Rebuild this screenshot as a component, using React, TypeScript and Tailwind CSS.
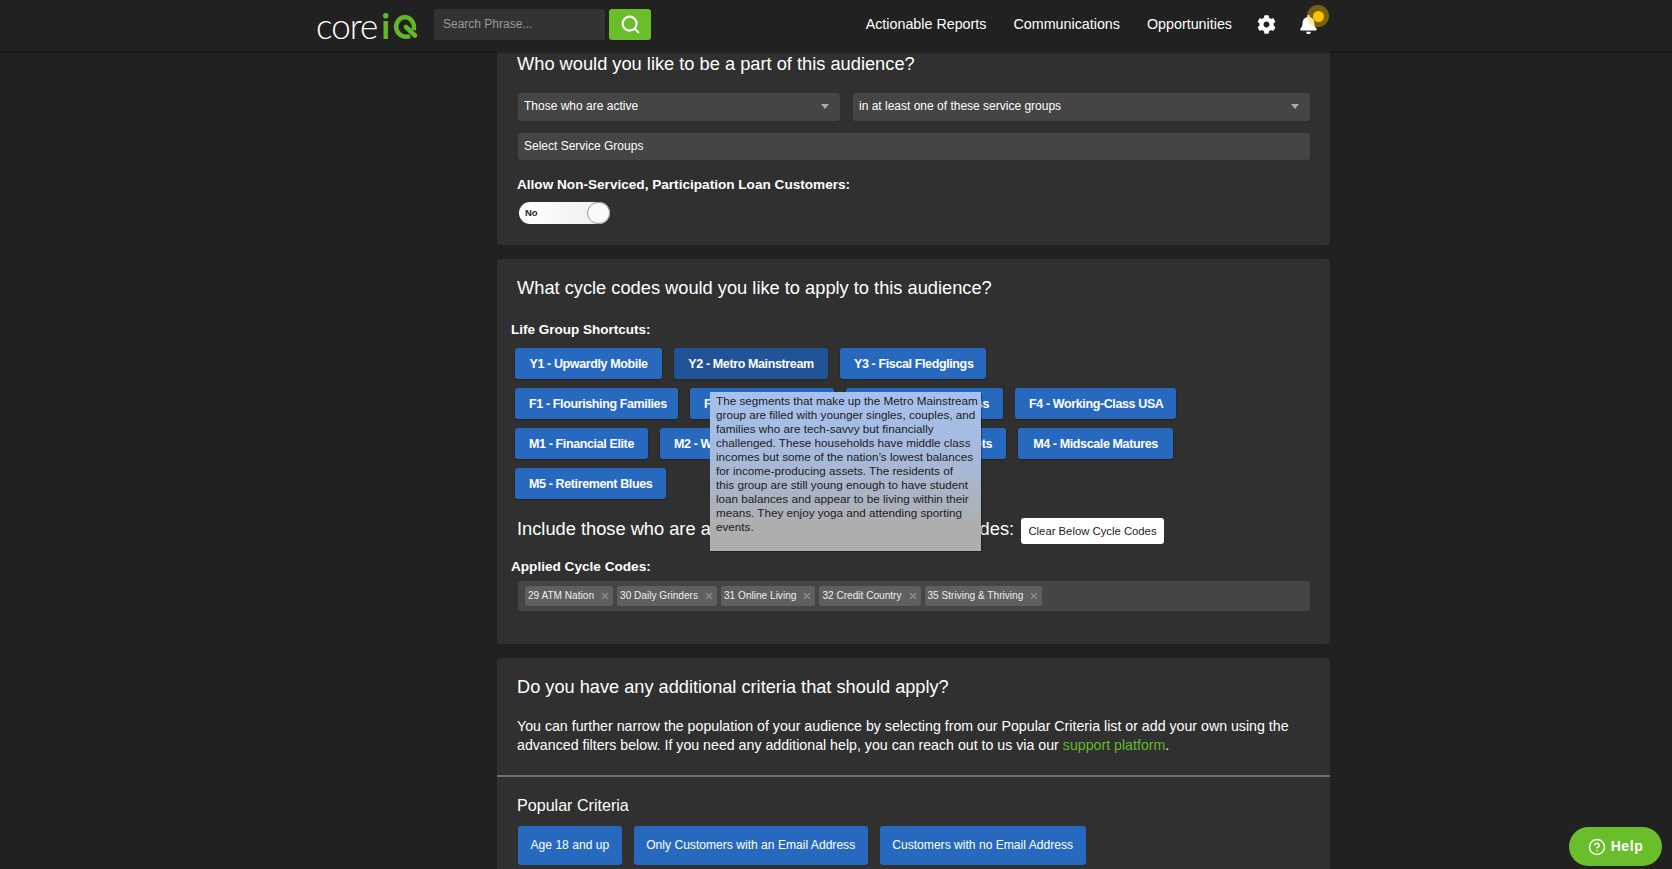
import { Search, X, CircleHelp } from "lucide-react";
import { FaCog, FaBell } from "react-icons/fa";

function Caret() {
  return <span className="w-0 h-0 border-x-[4px] border-x-transparent border-t-[5px] border-t-[#aaaaaa]" />;
}

function Shortcut({ label, width, dark }: { label: string; width: string; dark?: boolean }) {
  return (
    <button
      className={`h-[31px] px-[14px] pt-px rounded-[3px] text-white text-[12.5px] tracking-[-0.38px] font-bold whitespace-nowrap overflow-hidden shadow-[0_1px_2px_rgba(0,0,0,0.3)] ${dark ? "bg-[#215398]" : "bg-[#2869c0]"} ${width}`}
    >
      {label}
    </button>
  );
}

function Tag({ label }: { label: string }) {
  return (
    <span className="h-[20px] pl-[3px] pr-[3px] pb-px flex items-center gap-[6px] bg-[#5f5f5f] rounded-[3px] text-[10.1px] text-[#eeeeee] whitespace-nowrap">
      {label}
      <X size={10} strokeWidth={3} className="text-[#8e8e8e] mt-px" />
    </span>
  );
}

function Logo() {
  return (
    <div className="flex items-start h-[40px] w-[101px] leading-none select-none">
      <span className="font-['Lato'] font-light text-[35px] leading-[40px] text-white tracking-[-1px]">core</span>
      <span className="font-['Lato'] font-bold text-[35px] leading-[40px] text-[#63b829] ml-[4px]">i</span>
      <svg width="27" height="27" viewBox="0 0 27 27" className="ml-[1px] mt-[9px] shrink-0">
        <path d="M15 13 L24 21.5" stroke="#63b829" strokeWidth="4.5" strokeLinecap="round" fill="none" />
        <path d="M13 3 A10 10 0 1 0 19 22 M13 3 A10 10 0 0 1 22.5 16" stroke="#63b829" strokeWidth="4.5" fill="none" />
      </svg>
    </div>
  );
}

export default function App() {
  return (
    <div className="h-[869px] overflow-hidden bg-[#212121] text-white font-['Liberation_Sans',Arial,sans-serif]">
      <header className="relative z-10 h-[51px] bg-[#212121] flex items-center pb-[2px] pl-[316px] pr-[354px] shadow-[0_1px_3px_rgba(0,0,0,0.45)]">
        <Logo />
        <input
          placeholder="Search Phrase..."
          className="ml-[17px] w-[171px] h-[31px] rounded-[3px] bg-[#333333] pl-[9px] pb-[1px] text-[12px] text-white placeholder:text-[#999999] outline-none"
        />
        <button className="ml-[4px] w-[42px] h-[31px] rounded-[3px] bg-[#6abd2b] flex items-center justify-center">
          <Search size={21} strokeWidth={2.3} className="text-white" />
        </button>
        <nav className="ml-auto flex items-center text-[14.3px] text-white">
          <span>Actionable Reports</span>
          <span className="ml-[27px]">Communications</span>
          <span className="ml-[27px]">Opportunities</span>
          <FaCog size={19} className="ml-[25px]" />
          <span className="relative ml-[23px]">
            <FaBell size={19} />
            <span className="absolute left-[8px] -top-[10px] w-[22px] h-[22px] rounded-full bg-[#ffc40066] flex items-center justify-center">
              <span className="w-[11px] h-[11px] rounded-full bg-[#ffc400]" />
            </span>
          </span>
        </nav>
      </header>

      <main className="relative w-[833px] ml-[497px] flex flex-col gap-[14px]">
        <section className="bg-[#303030] rounded-b-[4px] pl-[21px] pr-[20px] pb-[21px]">
          <h2 className="text-[18.25px] leading-[26px] -ml-px">Who would you like to be a part of this audience?</h2>
          <div className="mt-[16px] flex gap-[13px]">
            <div className="flex-1 h-[28px] rounded-[3px] bg-[#454545] pl-[6px] pr-[11px] pb-[2px] flex items-center justify-between text-[12px]">
              <span>Those who are active</span>
              <Caret />
            </div>
            <div className="w-[457px] h-[28px] rounded-[3px] bg-[#454545] pl-[6px] pr-[11px] pb-[2px] flex items-center justify-between text-[12px]">
              <span>in at least one of these service groups</span>
              <Caret />
            </div>
          </div>
          <div className="mt-[12px] h-[27px] rounded-[3px] bg-[#454545] pl-[6px] pb-[1px] flex items-center text-[12px]">
            Select Service Groups
          </div>
          <div className="mt-[15px] text-[13.6px] leading-[20px] font-bold -ml-px">Allow Non-Serviced, Participation Loan Customers:</div>
          <div className="mt-[7px] ml-px relative w-[91px] h-[22px] rounded-full bg-[linear-gradient(90deg,#ffffff,#eeeeee)] flex items-center pl-[6px] text-[9.5px] font-bold text-[#222222]">
            No
            <span className="absolute right-0 top-0 w-[23px] h-[22px] rounded-full bg-[#fafafa] border border-[#9a9a9a]" />
          </div>
        </section>

        <section className="bg-[#303030] rounded-[4px] pt-[16px] pl-[14px] pr-[20px] pb-[33px]">
          <h2 className="text-[18.25px] leading-[26px] ml-[6px]">What cycle codes would you like to apply to this audience?</h2>
          <div className="mt-[19px] text-[13.5px] leading-[20px] font-bold">Life Group Shortcuts:</div>
          <div className="mt-[8px] pl-[4px] flex flex-col gap-[9px]">
            <div className="flex gap-[12px]">
              <Shortcut label="Y1 - Upwardly Mobile" width="w-[147px]" />
              <Shortcut label="Y2 - Metro Mainstream" width="w-[154px]" dark />
              <Shortcut label="Y3 - Fiscal Fledglings" width="w-[146px]" />
            </div>
            <div className="flex gap-[12px]">
              <Shortcut label="F1 - Flourishing Families" width="w-[163px]" />
              <Shortcut label="F2 - Family Balance" width="w-[144px] text-left" />
              <Shortcut label="F3 - Lifestyle Success" width="w-[157px] text-right" />
              <Shortcut label="F4 - Working-Class USA" width="w-[161px]" />
            </div>
            <div className="flex gap-[12px]">
              <Shortcut label="M1 - Financial Elite" width="w-[133px]" />
              <Shortcut label="M2 - Wealthy Seniors" width="w-[146px] text-left" />
              <Shortcut label="M3 - Liquid Assets" width="w-[188px] text-right" />
              <Shortcut label="M4 - Midscale Matures" width="w-[155px]" />
            </div>
            <div className="flex gap-[12px]">
              <Shortcut label="M5 - Retirement Blues" width="w-[151px]" />
            </div>
          </div>
          <div className="mt-[17px] ml-[7px] flex items-start">
            <h2 className="w-[504px] text-[18.25px] leading-[26px] whitespace-nowrap -ml-px">Include those who are assigned to the following Cycle Codes:</h2>
            <button className="mt-[2px] h-[26px] w-[143px] rounded-[3px] bg-white text-[#222222] text-[11.3px] whitespace-nowrap">
              Clear Below Cycle Codes
            </button>
          </div>
          <div className="mt-[13px] text-[13.6px] leading-[20px] font-bold">Applied Cycle Codes:</div>
          <div className="mt-[4px] ml-[7px] h-[30px] rounded-[3px] bg-[#454545] pl-[7px] flex items-center gap-[4px]">
            <Tag label="29 ATM Nation" />
            <Tag label="30 Daily Grinders" />
            <Tag label="31 Online Living" />
            <Tag label="32 Credit Country" />
            <Tag label="35 Striving & Thriving" />
          </div>
        </section>

        <section className="bg-[#303030] rounded-[4px] pt-[16px] pb-[20px]">
          <h2 className="text-[18.2px] leading-[26px] ml-[20px]">Do you have any additional criteria that should apply?</h2>
          <p className="mt-[17px] mx-[20px] text-[14.2px] leading-[19px]">
            You can further narrow the population of your audience by selecting from our Popular Criteria list or add your own using the advanced filters below. If you need any additional help, you can reach out to us via our{" "}
            <a className="text-[#63b829]">support platform</a>.
          </p>
          <div className="mt-[20px] h-[2px] bg-[#6e6e6e]" />
          <h3 className="mt-[16px] ml-[20px] text-[16.1px] leading-[24px]">Popular Criteria</h3>
          <div className="mt-[9px] ml-[21px] flex gap-[12px]">
            {["Age 18 and up", "Only Customers with an Email Address", "Customers with no Email Address"].map((t) => (
              <button key={t} className="h-[39px] px-[12.5px] pb-[1px] rounded-[3px] bg-[#2869c0] text-white text-[12.1px] whitespace-nowrap">
                {t}
              </button>
            ))}
          </div>
        </section>

        <div className="absolute left-[213px] top-[341px] w-[271px] h-[159px] pl-[6px] pt-[2px] text-[11.7px] leading-[14px] text-[#1c1c1c] bg-[linear-gradient(180deg,#a5c1ee_0%,#a7b9d8_45%,#aeaeae_85%)] shadow-[1px_1px_1px_rgba(0,0,0,0.3)]">
          <div className="whitespace-nowrap">The segments that make up the Metro Mainstream</div>
          <div className="whitespace-nowrap">group are filled with younger singles, couples, and</div>
          <div className="whitespace-nowrap">families who are tech-savvy but financially</div>
          <div className="whitespace-nowrap">challenged. These households have middle class</div>
          <div className="whitespace-nowrap">incomes but some of the nation’s lowest balances</div>
          <div className="whitespace-nowrap">for income-producing assets. The residents of</div>
          <div className="whitespace-nowrap">this group are still young enough to have student</div>
          <div className="whitespace-nowrap">loan balances and appear to be living within their</div>
          <div className="whitespace-nowrap">means. They enjoy yoga and attending sporting</div>
          <div className="whitespace-nowrap">events.</div>
        </div>
      </main>

      <button className="fixed left-[1569px] top-[827px] w-[93px] h-[39px] rounded-full bg-[#6abd2b] text-white flex items-center justify-center gap-[5px] text-[14px] font-bold tracking-[0.6px]">
        <CircleHelp size={18} strokeWidth={2} />
        Help
      </button>
    </div>
  );
}
